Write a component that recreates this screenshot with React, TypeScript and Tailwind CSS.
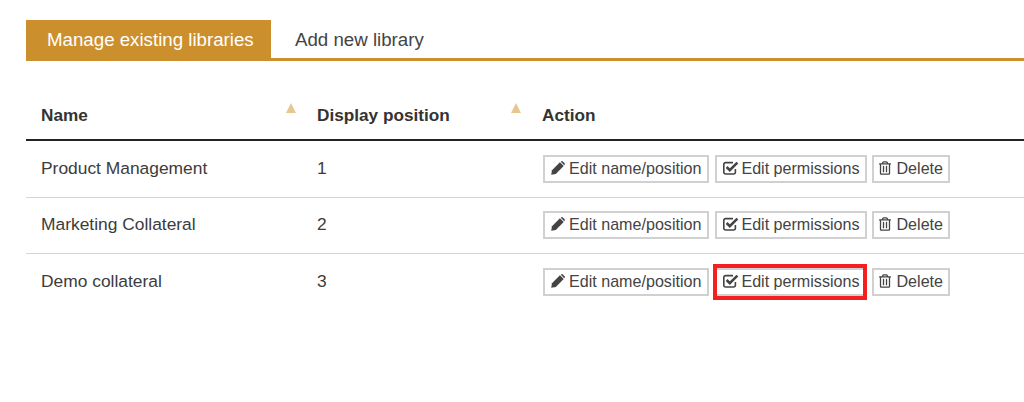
import { FaRegTrashAlt } from "react-icons/fa";

const rows = [
  { name: "Product Management", pos: 1, h: "h-[57px] [&>td]:pb-[1px]" },
  { name: "Marketing Collateral", pos: 2, h: "h-[56px] [&>td]:pb-[1px]" },
  { name: "Demo collateral", pos: 3, h: "h-[56px]", marked: true },
];

const btn = "flex items-center h-[28px] pl-[6px] pr-[6px] pb-[2px] bg-white border-2 border-[#d0d0d0] text-[16.1px] text-[#444] whitespace-nowrap";

const SortArrow = () => (
  <span className="absolute right-[7px] top-[0px] w-0 h-0 border-x-[5.5px] border-x-transparent border-b-[10px] border-b-[#e8c68f]" />
);

const PencilIcon = () => (
  <svg viewBox="0 0 14 14" className="w-[14px] h-[14px] mr-[4px]" fill="currentColor">
    <path d="M0.2 13.8 L1 9.2 L8.9 1.3 L12.7 5.1 L4.8 13 Z" />
    <path d="M9.8 0.8 L10.4 0.3 Q11.1 -0.2 11.8 0.4 L13.6 2.2 Q14.2 2.9 13.7 3.6 L13.2 4.2 Z" />
  </svg>
);

const CheckIcon = () => (
  <svg viewBox="0 0 16 14" className="w-[16px] h-[14px] mr-[2px]" fill="none" stroke="currentColor">
    <path d="M12.4 8 V11 Q12.4 13 10.4 13 H2.8 Q0.8 13 0.8 11 V3.6 Q0.8 1.6 2.8 1.6 H10" strokeWidth="1.6" />
    <path d="M3.6 6 L6.8 9.2 L14.4 1.6" strokeWidth="2.6" />
  </svg>
);

const App = () => {
  return (
    <div className="w-[1024px] h-[402px] bg-white pt-[20px] pl-[26px] overflow-hidden font-['Liberation_Sans',Arial,sans-serif]">
      <div className="flex h-[41px] border-b-[3px] border-[#cc8f2d]">
        <div className="h-[41px] w-[245px] pl-[21px] bg-[#cc8f2d] text-white text-[18.7px] flex items-center shrink-0">Manage existing libraries</div>
        <div className="px-[24px] h-[38px] pt-[2px] flex items-center text-[18.7px] text-[#444]">Add new library</div>
      </div>

      <table className="mt-[30px] w-[998px] table-fixed border-collapse">
        <thead>
          <tr className="h-[49px] border-b-2 border-[#222] [&>th]:pt-[1px]">
            <th className="w-[277px] pl-[15px] text-left text-[17.2px] font-bold text-[#333]">
              <div className="relative">Name<SortArrow /></div>
            </th>
            <th className="w-[225px] pl-[14px] text-left text-[17.2px] font-bold text-[#333]">
              <div className="relative">Display position<SortArrow /></div>
            </th>
            <th className="pl-[14px] text-left text-[17.2px] font-bold text-[#333]">Action</th>
          </tr>
        </thead>
        <tbody>
          {rows.map((row, i) => (
            <tr key={i} className={`${row.h} border-b border-[#d5d5d5] last:border-b-0 text-[17.4px] text-[#3c3c3c]`}>
              <td className="pl-[15px]">{row.name}</td>
              <td className="pl-[14px]">{row.pos}</td>
              <td className="pl-[15px]">
                <div className="flex items-center gap-[5px] pt-[1px]">
                  <button className={btn}>
                    <PencilIcon />Edit name/position
                  </button>
                  <div className="relative ml-[1px]">
                    <button className={btn}>
                      <CheckIcon />Edit permissions
                    </button>
                    {row.marked && <span className="absolute -top-[4px] -bottom-[4px] -left-[2px] right-0 border-[4px] border-[#f41f1f]" />}
                  </div>
                  <button className={`${btn} !pl-[5px] !pr-[5px]`}>
                    <FaRegTrashAlt className="w-[12px] h-[14px] mr-[5px]" />Delete
                  </button>
                </div>
              </td>
            </tr>
          ))}
        </tbody>
      </table>
    </div>
  );
};

export default App;
